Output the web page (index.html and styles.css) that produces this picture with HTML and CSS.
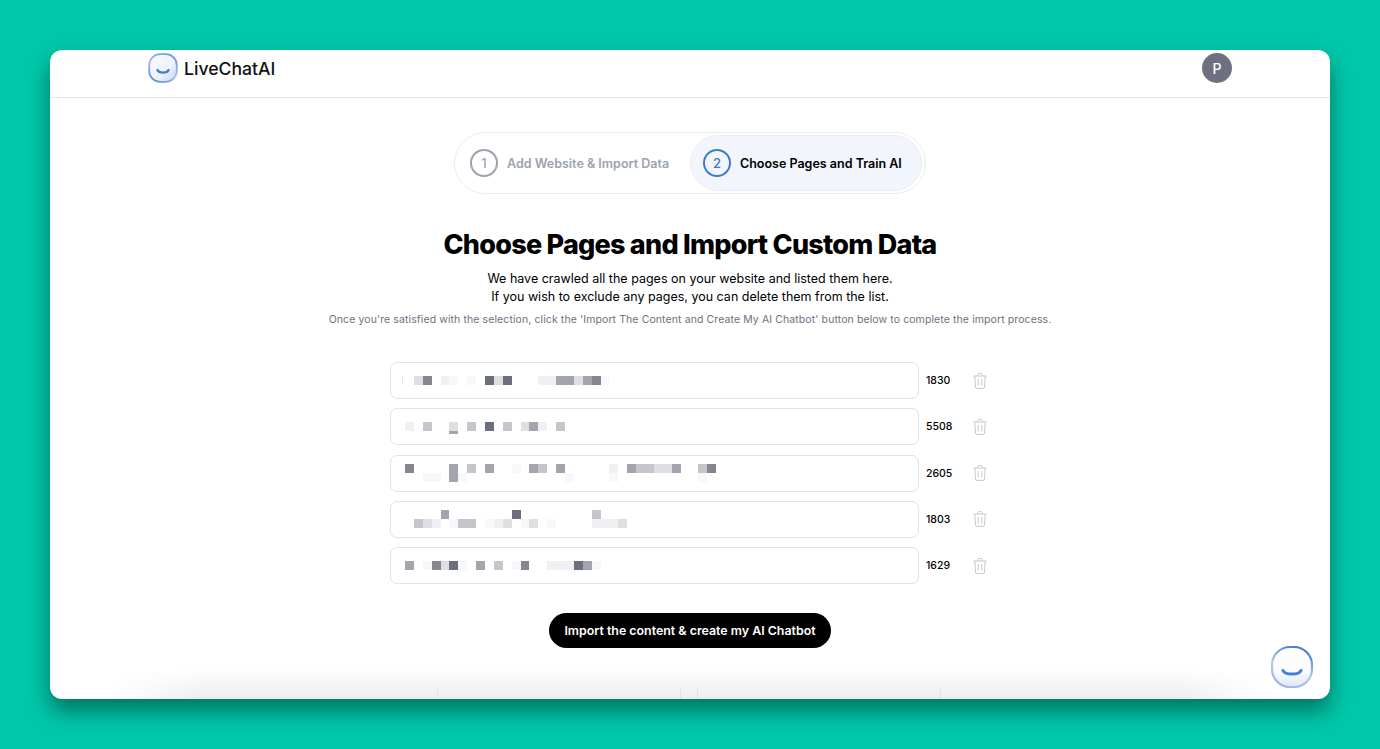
FILE: index.html
```html
<!DOCTYPE html>
<html lang="en">
<head>
<meta charset="UTF-8" />
<meta name="viewport" content="width=device-width, initial-scale=1.0" />
<title>LiveChatAI</title>
<link rel="stylesheet" href="styles.css">
</head>
<body>
  <div class="window">
    <header class="topbar">
      <div class="brand">
        <svg class="brand-logo" viewBox="0 0 30 30" width="30" height="30">
          <defs>
            <linearGradient id="logoFill" x1="0" y1="0" x2="1" y2="1">
              <stop offset="0" stop-color="#fbfcff"/>
              <stop offset="0.6" stop-color="#eef2fc"/>
              <stop offset="1" stop-color="#c3d3f2"/>
            </linearGradient>
            <linearGradient id="logoRing" x1="0.8" y1="0" x2="0.2" y2="1">
              <stop offset="0" stop-color="#6f97dc"/>
              <stop offset="0.55" stop-color="#a8bfe8"/>
              <stop offset="1" stop-color="#5f8ad6"/>
            </linearGradient>
          </defs>
          <rect x="1.200" y="1.200" width="27.600" height="27.600" rx="11" fill="url(#logoFill)" stroke="url(#logoRing)" stroke-width="1.800"/>
          <path d="M9.500 17c1.400 3.400 9.600 3.400 11 0" fill="none" stroke="#3f7bd8" stroke-width="2.200" stroke-linecap="round"/>
        </svg>
        <span class="brand-name">LiveChatAI</span>
      </div>
      <div class="avatar">P</div>
    </header>

    <main class="content">
      <div class="steps">
        <div class="step">
          <span class="step-num">1</span>
          <span class="step-label">Add Website &amp; Import Data</span>
        </div>
        <div class="step active">
          <span class="step-num">2</span>
          <span class="step-label">Choose Pages and Train AI</span>
        </div>
      </div>

      <h1>Choose Pages and Import Custom Data</h1>
      <p class="lead">We have crawled all the pages on your website and listed them here.<br>If you wish to exclude any pages, you can delete them from the list.</p>
      <p class="note">Once you're satisfied with the selection, click the 'Import The Content and Create My AI Chatbot' button below to complete the import process.</p>

      <div class="pages">
        <div class="page-row">
          <div class="url-field">
            <div class="blur-line ticked"><i class="s0"></i><i class="s2"></i><i class="s5"></i><i class="s0"></i><i class="s1"></i><i class="s7"></i><i class="s0"></i><i class="s7"></i><i class="s0"></i><i class="s6"></i><i class="s2"></i><i class="s6"></i><i class="s0"></i><i class="s0"></i><i class="s0"></i><i class="s1"></i><i class="s1"></i><i class="s4"></i><i class="s4"></i><i class="s2"></i><i class="s4"></i><i class="s5"></i><i class="s7"></i></div>
          </div>
          <span class="count">1830</span>
          <svg class="trash" viewBox="0 0 14 16" width="14" height="16"><use href="#trashIcon"/></svg>
        </div>
        <div class="page-row">
          <div class="url-field">
            <div class="blur-line"><i class="s1"></i><i class="s0"></i><i class="s3"></i><i class="s0"></i><i class="s0"></i><i class="s2 under"></i><i class="s0"></i><i class="s3"></i><i class="s0"></i><i class="s6"></i><i class="s0"></i><i class="s3"></i><i class="s0"></i><i class="s2"></i><i class="s4"></i><i class="s1"></i><i class="s0"></i><i class="s3"></i></div>
          </div>
          <span class="count">5508</span>
          <svg class="trash" viewBox="0 0 14 16" width="14" height="16"><use href="#trashIcon"/></svg>
        </div>
        <div class="page-row">
          <div class="url-field">
            <div class="blur-line"><i class="s5"></i><i class="s0"></i><i class="s0"></i><i class="s0"></i><i class="s0"></i><i class="s4"></i><i class="s0"></i><i class="s3"></i><i class="s0"></i><i class="s4"></i><i class="s0"></i><i class="s0"></i><i class="s7"></i><i class="s0"></i><i class="s4"></i><i class="s3"></i><i class="s0"></i><i class="s4"></i><i class="s0"></i><i class="s0"></i><i class="s0"></i><i class="s0"></i><i class="s0"></i><i class="s1"></i><i class="s0"></i><i class="s4"></i><i class="s3"></i><i class="s3"></i><i class="s2"></i><i class="s2"></i><i class="s4"></i><i class="s0"></i><i class="s0"></i><i class="s3"></i><i class="s5"></i></div>
            <div class="blur-line"><i class="s0"></i><i class="s0"></i><i class="s7"></i><i class="s7"></i><i class="s0"></i><i class="s4"></i><i class="s7"></i><i class="s0"></i><i class="s0"></i><i class="s0"></i><i class="s0"></i><i class="s0"></i><i class="s0"></i><i class="s0"></i><i class="s0"></i><i class="s0"></i><i class="s0"></i><i class="s0"></i><i class="s7"></i><i class="s0"></i><i class="s0"></i><i class="s0"></i><i class="s0"></i><i class="s7"></i><i class="s0"></i><i class="s0"></i><i class="s0"></i><i class="s0"></i><i class="s0"></i><i class="s0"></i><i class="s0"></i><i class="s0"></i><i class="s0"></i><i class="s7"></i></div>
          </div>
          <span class="count">2605</span>
          <svg class="trash" viewBox="0 0 14 16" width="14" height="16"><use href="#trashIcon"/></svg>
        </div>
        <div class="page-row">
          <div class="url-field">
            <div class="blur-line"><i class="s0"></i><i class="s0"></i><i class="s0"></i><i class="s0"></i><i class="s4"></i><i class="s0"></i><i class="s0"></i><i class="s0"></i><i class="s0"></i><i class="s0"></i><i class="s0"></i><i class="s0"></i><i class="s6"></i><i class="s0"></i><i class="s0"></i><i class="s0"></i><i class="s0"></i><i class="s0"></i><i class="s0"></i><i class="s0"></i><i class="s0"></i><i class="s3"></i></div>
            <div class="blur-line"><i class="s0"></i><i class="s3"></i><i class="s2"></i><i class="s1"></i><i class="s0"></i><i class="s7"></i><i class="s3"></i><i class="s3"></i><i class="s0"></i><i class="s7"></i><i class="s1"></i><i class="s2"></i><i class="s0"></i><i class="s7"></i><i class="s2"></i><i class="s0"></i><i class="s7"></i><i class="s0"></i><i class="s0"></i><i class="s0"></i><i class="s0"></i><i class="s1"></i><i class="s1"></i><i class="s1"></i><i class="s2"></i></div>
          </div>
          <span class="count">1803</span>
          <svg class="trash" viewBox="0 0 14 16" width="14" height="16"><use href="#trashIcon"/></svg>
        </div>
        <div class="page-row">
          <div class="url-field">
            <div class="blur-line"><i class="s4"></i><i class="s0"></i><i class="s7"></i><i class="s5"></i><i class="s2"></i><i class="s6"></i><i class="s7"></i><i class="s0"></i><i class="s4"></i><i class="s0"></i><i class="s3"></i><i class="s0"></i><i class="s7"></i><i class="s5"></i><i class="s0"></i><i class="s0"></i><i class="s1"></i><i class="s1"></i><i class="s1"></i><i class="s6"></i><i class="s4"></i><i class="s7"></i></div>
          </div>
          <span class="count">1629</span>
          <svg class="trash" viewBox="0 0 14 16" width="14" height="16"><use href="#trashIcon"/></svg>
        </div>
      </div>

      <button class="import-btn">Import the content &amp; create my AI Chatbot</button>
    </main>

    <div class="fold">
      <span class="fold-card"></span>
      <span class="fold-card"></span>
    </div>

    <div class="chat-bubble">
      <svg viewBox="0 0 44 44" width="44" height="44">
        <defs>
          <linearGradient id="bubbleRing" x1="0.7" y1="0" x2="0.3" y2="1">
            <stop offset="0" stop-color="#3f78cf"/>
            <stop offset="0.55" stop-color="#b7c8ea"/>
            <stop offset="1" stop-color="#9db3df"/>
          </linearGradient>
          <linearGradient id="bubbleFill" x1="0" y1="0" x2="0" y2="1">
            <stop offset="0" stop-color="#ffffff"/>
            <stop offset="0.6" stop-color="#fbfbfe"/>
            <stop offset="1" stop-color="#dfe6f4"/>
          </linearGradient>
        </defs>
        <rect class="bubble-ring" x="2" y="2" width="40" height="40" rx="18" fill="url(#bubbleFill)" stroke="url(#bubbleRing)" stroke-width="2.200"/>
        <path d="M13 25.500c2 4.800 16 4.800 18 0" fill="none" stroke="#3f7fd8" stroke-width="3" stroke-linecap="round"/>
      </svg>
    </div>
  </div>

  <svg class="icon-defs" width="0" height="0">
    <symbol id="trashIcon" viewBox="0 0 14 16">
      <path d="M.5 3h13M4.700 3V1.600c0-.6.4-1 1-1h2.600c.6 0 1 .4 1 1V3M1.800 3l.7 11c.05.8.6 1.400 1.400 1.400h6.200c.8 0 1.350-.6 1.400-1.400l.7-11M5.200 6v6.500M8.800 6v6.500" fill="none" stroke="#c6c8cd" stroke-width="1"/>
    </symbol>
  </svg>
</body>
</html>
```

FILE: styles.css
```css
body {
  margin: 0;
  height: 749px;
  overflow: hidden;
  box-sizing: border-box;
  padding: 50px;
  background: #00c7a9;
  font-family: Inter, 'Liberation Sans', sans-serif;
  color: #000;
}
.window {
  position: relative;
  height: 649px;
  background: #fff;
  border-radius: 12px;
  overflow: hidden;
  box-shadow: 0 12px 22px 0 rgba(0, 0, 0, 0.42);
}
.topbar {
  height: 44px;
  border-bottom: 1px solid #e5e7eb;
  padding: 3px 98px 0;
  display: flex;
  justify-content: space-between;
  align-items: flex-start;
}
.brand {
  display: flex;
  align-items: center;
  gap: 6px;
}
.brand-name {
  font-family: Inter, sans-serif;
  font-size: 17.600px;
  font-weight: 500;
  color: #111;
}
.avatar {
  width: 30px;
  height: 30px;
  border-radius: 50%;
  background: #6e7080;
  color: #fff;
  font-size: 14px;
  font-weight: 500;
  display: flex;
  align-items: center;
  justify-content: center;
}
.content {
  display: flex;
  flex-direction: column;
  align-items: center;
  padding-top: 34px;
}
.steps {
  display: flex;
  align-items: center;
  justify-content: space-between;
  width: 472px;
  height: 62px;
  box-sizing: border-box;
  padding: 0 3px 0 15px;
  border: 1px solid #eaebef;
  border-radius: 31px;
}
.step {
  display: flex;
  align-items: center;
  gap: 9px;
}
.step.active {
  height: 56px;
  width: 232px;
  box-sizing: border-box;
  padding-left: 12px;
  background: #f2f5fc;
  border: 1px solid #e8ecf5;
  border-radius: 28px;
}
.step-num {
  width: 28px;
  height: 28px;
  box-sizing: border-box;
  border: 2px solid #9ca3af;
  border-radius: 50%;
  color: #9ca3af;
  font-size: 13px;
  font-weight: 500;
  display: flex;
  align-items: center;
  justify-content: center;
}
.step-label {
  font-size: 12.500px;
  font-weight: 600;
  color: #9ca3af;
}
.active .step-num {
  border-color: #3d7dc6;
  color: #3d7dc6;
}
.active .step-label {
  color: #000;
}
h1 {
  margin: 33px 0 0;
  font-size: 27px;
  line-height: 36px;
  font-weight: 800;
  letter-spacing: -0.75px;
  color: #000;
}
.lead {
  margin: 7px 0 0;
  font-size: 12.500px;
  line-height: 18px;
  text-align: center;
}
.note {
  margin: 7px 0 0;
  font-size: 10.500px;
  line-height: 14px;
  color: #6b7280;
  letter-spacing: 0.1px;
}
.pages {
  margin-top: 35px;
  display: flex;
  flex-direction: column;
  gap: 9.300px;
  width: 600px;
}
.page-row {
  display: flex;
  align-items: center;
}
.url-field {
  width: 529px;
  height: 37px;
  box-sizing: border-box;
  border: 1px solid #dfe1e5;
  border-radius: 7px;
  padding-left: 14px;
  display: flex;
  flex-direction: column;
  justify-content: center;
}
.blur-line {
  position: relative;
  display: flex;
  height: 9px;
}
.blur-line.ticked::before {
  content: "";
  position: absolute;
  left: -3px;
  top: 1px;
  width: 1px;
  height: 8px;
  background: #e4e4e8;
}
.blur-line i {
  position: relative;
  width: 8.900px;
  height: 9px;
}
.s0 { background: transparent; }
.s1 { background: #f0f0f3; }
.s2 { background: #dedfe3; }
.s3 { background: #c4c6cc; }
.s4 { background: #a2a4ae; }
.s5 { background: #85878f; }
.s6 { background: #6b6e7c; }
.s7 { background: #f8f8fa; }
.blur-line i.under::after {
  content: "";
  position: absolute;
  left: 0;
  top: 9px;
  width: 9px;
  height: 3px;
  background: #a2a4ae;
}
.count {
  margin-left: 7px;
  width: 47px;
  font-size: 10.500px;
  font-weight: 500;
}
.trash {
  display: block;
}
.icon-defs {
  position: absolute;
}
.import-btn {
  margin-top: 29px;
  width: 282px;
  height: 35px;
  border: none;
  border-radius: 18px;
  background: #000;
  color: #fff;
  font-family: inherit;
  font-size: 12.400px;
  font-weight: 600;
  cursor: pointer;
}
.fold {
  position: absolute;
  left: 0;
  right: 0;
  bottom: 0;
  height: 30px;
  background: linear-gradient(to bottom, rgba(0, 0, 0, 0), rgba(0, 0, 0, 0.07));
  -webkit-mask-image: linear-gradient(to right, transparent 60px, #000 150px, #000 1130px, transparent 1220px);
  mask-image: linear-gradient(to right, transparent 60px, #000 150px, #000 1130px, transparent 1220px);
  display: flex;
  align-items: flex-end;
  gap: 16px;
  padding-left: 387px;
  box-sizing: border-box;
}
.fold-card {
  width: 244px;
  height: 11px;
  box-sizing: border-box;
  border-left: 1px solid #e3e3e5;
  border-right: 1px solid #e3e3e5;
}
.chat-bubble {
  position: absolute;
  right: 16px;
  bottom: 10px;
  width: 44px;
  height: 44px;
}
.bubble-ring {
  filter: blur(0.4px);
}
```
